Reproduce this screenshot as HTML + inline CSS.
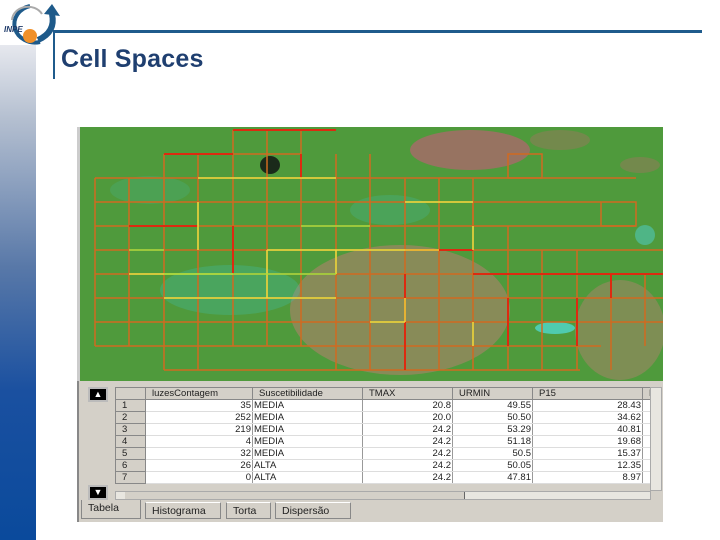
<!DOCTYPE html>
<html><head><meta charset="utf-8"><style>
*{margin:0;padding:0;box-sizing:border-box}
body{width:720px;height:540px;background:#fff;position:relative;overflow:hidden;font-family:"Liberation Sans",sans-serif}
.bar{position:absolute;left:0;top:45px;width:36px;height:495px;background:linear-gradient(#e6e8ee 0%,#b4bfd0 15%,#5878a8 45%,#1a50a0 70%,#0a4a9c 100%)}
.hl{position:absolute;left:54px;top:30px;width:648px;height:3px;background:#1f5b8c}
.vl{position:absolute;left:53px;top:30px;width:2px;height:49px;background:#1f5b8c}
h1{position:absolute;left:61px;top:45px;font-size:25px;font-weight:bold;color:#1f3f70;letter-spacing:0.2px}
.panel{position:absolute;left:77px;top:381px;width:586px;height:141px;background:#d4d0c8;border-left:2px solid #888}
table{position:absolute;left:36px;top:6px;border-collapse:collapse;font-size:9.5px;color:#222;background:#fff}
td{height:11.6px;border-right:1px solid #999;border-bottom:1px solid #ddd;padding:0 1px;text-align:right;line-height:11px;white-space:nowrap}
tr.h td{background:#d4d0c8;text-align:left;border:1px solid #888;padding-left:6px}
td.n{background:#d4d0c8;text-align:left;padding-left:6px;border:1px solid #888}
.btn{position:absolute;left:9px;width:20px;height:15px;background:#000;border:2px solid #bbb;color:#fff;font-size:9px;text-align:center;line-height:11px}
.tabs{position:absolute;left:2px;top:121px;font-size:10.5px;color:#222}
.tab{position:absolute;top:0;height:17px;border:1px solid #888;border-top:1px solid #fff;padding:2px 6px;background:#d4d0c8}
</style></head><body>
<div class="bar"></div>
<svg style="position:absolute;left:0;top:0" width="70" height="50">
<path d="M30 6 A20 18 0 1 0 40 42" fill="none" stroke="#1e5a8a" stroke-width="4"/>
<path d="M12 20 A16 14 0 0 1 42 14" fill="none" stroke="#aaa" stroke-width="2"/>
<path d="M38 40 Q56 32 52 14" fill="none" stroke="#1e5a8a" stroke-width="6"/>
<path d="M44 14 L52 4 L60 16 Z" fill="#1e5a8a"/>
<circle cx="30" cy="36" r="7" fill="#f0902a"/>
<text x="4" y="32" font-size="8" font-style="italic" font-weight="bold" fill="#1e3a6a" font-family="Liberation Sans">INPE</text>
</svg>
<div class="hl"></div><div class="vl"></div>
<h1>Cell Spaces</h1>

<svg style="position:absolute;left:77px;top:127px" width="586" height="256" viewBox="77 127 586 256">
<rect x="77" y="127" width="586" height="256" fill="#4f9a3c"/>
<rect x="77" y="127" width="3" height="256" fill="#ccc"/>
<ellipse cx="470" cy="150" rx="60" ry="20" fill="#c85a7a" opacity=".6"/>
<ellipse cx="560" cy="140" rx="30" ry="10" fill="#b86a6a" opacity=".35"/>
<ellipse cx="640" cy="165" rx="20" ry="8" fill="#b86a6a" opacity=".35"/>
<ellipse cx="400" cy="310" rx="110" ry="65" fill="#b88070" opacity=".55"/>
<ellipse cx="620" cy="330" rx="45" ry="50" fill="#b88070" opacity=".45"/>
<ellipse cx="270" cy="165" rx="10" ry="9" fill="#1a2a1a"/>
<ellipse cx="230" cy="290" rx="70" ry="25" fill="#40c0b0" opacity=".3"/>
<ellipse cx="390" cy="210" rx="40" ry="15" fill="#40c0b0" opacity=".25"/>
<ellipse cx="150" cy="190" rx="40" ry="14" fill="#40c0b0" opacity=".2"/>
<ellipse cx="555" cy="328" rx="20" ry="6" fill="#50e0e0" opacity=".7"/>
<ellipse cx="645" cy="235" rx="10" ry="10" fill="#50d0d0" opacity=".5"/>
<g fill="none" stroke-width="1.5">
<g stroke="#d06a20">
<path d="M95 178H636 M95 202H601 M95 226H636 M95 250H663 M95 274H663 M95 298H663 M95 322H663 M95 346H601 M164 370H580"/>
<path d="M95 178V346 M129 178V346 M164 154V370 M198 154V370 M233 130V346 M267 130V346 M301 130V346 M336 154V370 M370 154V370 M405 178V370 M439 178V370 M473 178V370 M508 226V370 M542 250V370 M577 250V370 M611 274V370 M645 274V346"/>
<path d="M164 154H301 M233 130H336 M508 154H542 V178 H508Z M473 202V226 M601 202H636V226H601Z"/>
</g>
<g stroke="#dd2a10" stroke-width="2">
<path d="M233 130H336 M164 154H233 M301 154V178 M129 226H198 M233 226V274 M405 250H473 M473 274H663 M405 274V370 M508 298V346 M577 298V346 M611 274V298"/>
</g>
<g stroke="#e8e040">
<path d="M198 178H336 M198 202V250 M267 250H439 M267 250V298 M336 250V274 M164 298H336 M129 274H233 M405 202H473 M473 226V250 M405 298V322 M370 322H405 M473 322V346"/>
</g>
<g stroke="#a0e040">
<path d="M164 274H336 M301 226H370 M129 250H164"/>
</g>
</g>
</svg>

<div class="panel">
<div class="btn" style="top:6px">▲</div>
<div class="btn" style="top:104px">▼</div>
<table>
<tr class="h"><td style="width:30px"></td><td style="width:107px">luzesContagem</td><td style="width:110px">Suscetibilidade</td><td style="width:90px">TMAX</td><td style="width:80px">URMIN</td><td style="width:110px">P15</td><td style="width:10px">F</td></tr>
<tr><td class="n">1</td><td>35</td><td style="text-align:left">MEDIA</td><td>20.8</td><td>49.55</td><td>28.43</td><td></td></tr>
<tr><td class="n">2</td><td>252</td><td style="text-align:left">MEDIA</td><td>20.0</td><td>50.50</td><td>34.62</td><td></td></tr>
<tr><td class="n">3</td><td>219</td><td style="text-align:left">MEDIA</td><td>24.2</td><td>53.29</td><td>40.81</td><td></td></tr>
<tr><td class="n">4</td><td>4</td><td style="text-align:left">MEDIA</td><td>24.2</td><td>51.18</td><td>19.68</td><td></td></tr>
<tr><td class="n">5</td><td>32</td><td style="text-align:left">MEDIA</td><td>24.2</td><td>50.5</td><td>15.37</td><td></td></tr>
<tr><td class="n">6</td><td>26</td><td style="text-align:left">ALTA</td><td>24.2</td><td>50.05</td><td>12.35</td><td></td></tr>
<tr><td class="n">7</td><td>0</td><td style="text-align:left">ALTA</td><td>24.2</td><td>47.81</td><td>8.97</td><td></td></tr>
</table>
<div style="position:absolute;left:36px;top:110px;width:536px;height:9px;background:#e8e6e0;border:1px solid #aaa"></div>
<div style="position:absolute;left:46px;top:111px;width:340px;height:7px;background:#d4d0c8;border-right:1px solid #666"></div>
<div style="position:absolute;left:571px;top:6px;width:12px;height:104px;background:#e8e6e0;border:1px solid #aaa"></div>
<div class="tabs">
<div class="tab" style="left:0;width:60px;border-top:none;background:#d4d0c8;top:-2px;height:19px">Tabela</div>
<div class="tab" style="left:64px;width:76px">Histograma</div>
<div class="tab" style="left:145px;width:45px">Torta</div>
<div class="tab" style="left:194px;width:76px">Dispersão</div>
</div>
</div>
</body></html>
